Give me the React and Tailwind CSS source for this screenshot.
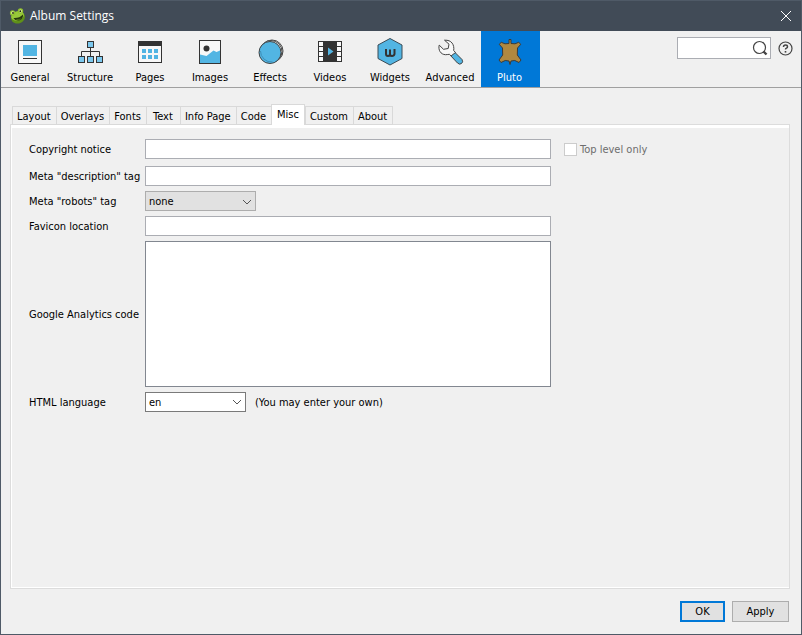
import { useState } from "react";

function FrogIcon() {
  return (
    <svg width="17" height="17" viewBox="0 0 17 17" aria-hidden="true">
      <ellipse cx="9" cy="9.500" rx="7" ry="6" transform="rotate(-18 9 9.500)" fill="#5f9018" />
      <ellipse cx="8.500" cy="7.800" rx="6.500" ry="4.600" transform="rotate(-18 8.500 7.800)" fill="#98c83a" />
      <circle cx="3.600" cy="5" r="2.700" fill="#8fc02c" />
      <circle cx="11.500" cy="3" r="2.700" fill="#8fc02c" />
      <circle cx="3.600" cy="4.800" r="1.500" fill="#dceaa0" />
      <circle cx="11.500" cy="2.900" r="1.500" fill="#dceaa0" />
      <circle cx="4" cy="5" r="0.900" fill="#1d2a08" />
      <circle cx="11.300" cy="3.200" r="0.900" fill="#1d2a08" />
      <path d="M4.500 10c3.500.4 7-.8 9.500-3.500.3 3.200-1.500 5.600-4.300 6-2.400.2-4.200-.6-5.200-2.500z" fill="#26380c" />
      <path d="M6.500 11.500c1.800.3 4-.3 5.500-1.500-.8 1.500-3.500 2.600-5.500 1.500z" fill="#7ba62c" />
    </svg>
  );
}

function GeneralIcon() {
  return (
    <svg width="30" height="30" viewBox="0 0 30 30" aria-hidden="true">
      <rect x="3.500" y="3.500" width="23" height="23" fill="#f8f8f8" stroke="#333" />
      <rect x="8" y="8" width="14" height="11" fill="#52b5e3" />
      <path d="M8 21.500h14" stroke="#333" />
    </svg>
  );
}

function StructureIcon() {
  return (
    <svg width="30" height="30" viewBox="0 0 30 30" fill="#7cc8ee" stroke="#333" aria-hidden="true">
      <path d="M15.500 10v10M6.500 20v-5.500h18V20" fill="none" />
      <rect x="12.500" y="4.500" width="6" height="6" />
      <rect x="3.500" y="19.500" width="6" height="6" />
      <rect x="12.500" y="19.500" width="6" height="6" />
      <rect x="21.500" y="19.500" width="6" height="6" />
    </svg>
  );
}

function PagesIcon() {
  return (
    <svg width="30" height="30" viewBox="0 0 30 30" aria-hidden="true">
      <rect x="3.500" y="4.500" width="23" height="21" fill="#f8f8f8" stroke="#333" />
      <path d="M3 4h24v5H3z" fill="#333" />
      <path
        d="M7 12h4v4H7zM13 12h4v4h-4zM19 12h4v4h-4zM7 18h4v4H7zM13 18h4v4h-4zM19 18h4v4h-4z"
        fill="#52b5e3"
      />
    </svg>
  );
}

function ImagesIcon() {
  return (
    <svg width="30" height="30" viewBox="0 0 30 30" aria-hidden="true">
      <rect x="4.500" y="3.500" width="21" height="23" fill="#f8f8f8" stroke="#333" />
      <path d="M5 17.500l6.500 1.500 7-5.500 3 1.500 3.500-1.500V26H5z" fill="#52b5e3" />
      <circle cx="11.500" cy="11.500" r="3" fill="#333" />
    </svg>
  );
}

function EffectsIcon() {
  return (
    <svg width="30" height="30" viewBox="0 0 30 30" stroke="#444" aria-hidden="true">
      <circle cx="17" cy="14" r="11" fill="#f8f8f8" />
      <circle cx="16" cy="14.500" r="11" fill="#f8f8f8" />
      <circle cx="15" cy="15.500" r="11" fill="#52b5e3" />
      <path d="M5.500 14a11 11 0 0 0 12 11" fill="none" stroke="#3d8fb8" />
    </svg>
  );
}

function VideosIcon() {
  return (
    <svg width="30" height="30" viewBox="0 0 30 30" aria-hidden="true">
      <path d="M3 4h24v21H3z" fill="#333" />
      <path
        d="M4 5h4v4H4zM4 10h4v4H4zM4 15h4v4H4zM4 20h4v4H4zM22 5h4v4h-4zM22 10h4v4h-4zM22 15h4v4h-4zM22 20h4v4h-4z"
        fill="#f8f8f8"
      />
      <path d="M13 10.500l5.500 4-5.500 4z" fill="#52b5e3" />
    </svg>
  );
}

function WidgetsIcon() {
  return (
    <svg width="30" height="30" viewBox="0 0 30 30" aria-hidden="true">
      <path d="M15 1.500l12 6.500v13.500l-12 6.500-12-6.500V8z" fill="#52b5e3" stroke="#3a4a55" />
      <path
        d="M11 12v5q0 2 2 2t2-2v-4.500M15 17q0 2 2 2t2.500-2v-5"
        fill="none"
        stroke="#333"
        strokeWidth="2"
      />
    </svg>
  );
}

function AdvancedIcon() {
  return (
    <svg width="30" height="30" viewBox="0 0 30 30" stroke="#444" strokeLinejoin="round" aria-hidden="true">
      <path d="M15.500 18.500l4-3.500 7.500 7.500q1.500 2.500-.5 4t-4-.5z" fill="#52b5e3" />
      <path
        d="M9.500 3.200l4.500 4-.8 4.300-4.700.8-4.300-4.200c-1.200 5 1.500 9.400 6.300 9.600 1.800 0 3-.4 4-.4l1.500 1.700 4.500-3.500-1.800-2c.8-5.600-2-10.800-9.200-10.300z"
        fill="#f8f8f8"
      />
    </svg>
  );
}

function PlutoIcon() {
  return (
    <svg width="30" height="30" viewBox="0 0 30 30" aria-hidden="true">
      <path
        d="M14 2.500h2v4l4 .3 3.700-1.500 2.100 2-3.300 3.700-.2 7 3.700 5-2 2.500-4.200-2-3.800.5-1 3.500-1-3.500-3.800-.5-4.200 2-2-2.500 3.700-5-.2-7L4.200 7.300l2.100-2L10 6.800l4-.3z"
        fill="#b08840"
        stroke="#3c3a38"
      />
    </svg>
  );
}

function Chevron() {
  return (
    <svg width="10" height="6" viewBox="0 0 10 6" fill="none" stroke="#555" aria-hidden="true">
      <path d="M1 1l4 4 4-4" />
    </svg>
  );
}

const sections = [
  { name: "General", icon: GeneralIcon },
  { name: "Structure", icon: StructureIcon },
  { name: "Pages", icon: PagesIcon },
  { name: "Images", icon: ImagesIcon },
  { name: "Effects", icon: EffectsIcon },
  { name: "Videos", icon: VideosIcon },
  { name: "Widgets", icon: WidgetsIcon },
  { name: "Advanced", icon: AdvancedIcon },
  { name: "Pluto", icon: PlutoIcon },
];

const tabs = ["Layout", "Overlays", "Fonts", "Text", "Info Page", "Code", "Misc", "Custom", "About"];

const labelClass = "pt-[2px]";
const fieldClass = "w-full h-5 px-1 bg-white border border-[#abadb3] outline-none";

export default function App() {
  const [section, setSection] = useState("Pluto");
  const [tab, setTab] = useState("Misc");
  const [robots, setRobots] = useState("none");
  const [language, setLanguage] = useState("en");

  return (
    <div className="min-h-screen flex flex-col bg-[#f0f0f0] border border-[#4f5a67] text-black text-[11px] leading-4 font-['DejaVu_Sans_Condensed','DejaVu_Sans',sans-serif]">
      <header className="flex items-center h-[30px] pl-2 pr-[5px] bg-[#414b57] text-white">
        <FrogIcon />
        <h1 className="ml-1 text-[12px] font-['Open_Sans',sans-serif]">Album Settings</h1>
        <button type="button" aria-label="Close" className="ml-auto p-1">
          <svg width="12" height="12" viewBox="0 0 12 12" stroke="#fff" aria-hidden="true">
            <path d="M1 1l10 10M11 1L1 11" />
          </svg>
        </button>
      </header>

      <div className="flex items-start border-b border-[#a0a0a0]">
        <nav className="flex">
          {sections.map(({ name, icon: Icon }) => (
            <button
              key={name}
              type="button"
              onClick={() => setSection(name)}
              className={`w-[60px] h-14 pt-[6px] pr-[2px] last:w-[59px] flex flex-col items-center gap-[3px] ${
                section === name ? "bg-[#0078d7] text-white" : ""
              }`}
            >
              <Icon />
              <span>{name}</span>
            </button>
          ))}
        </nav>
        <div className="ml-auto mt-[6px] mr-2 flex items-center gap-[7px]">
          <div className="flex items-center w-[94px] h-[22px] pr-[2px] bg-white border border-[#abadb3]">
            <input type="text" aria-label="Search" className="min-w-0 flex-1 h-full px-1 outline-none" />
            <svg width="16" height="16" viewBox="0 0 16 16" fill="none" stroke="#444" aria-hidden="true">
              <circle cx="7.500" cy="7.500" r="6" strokeWidth="1.200" />
              <path d="M11.500 11.500l3 3" strokeWidth="2.400" />
            </svg>
          </div>
          <button type="button" aria-label="Help">
            <svg width="15" height="15" viewBox="0 0 15 15" fill="none" stroke="#444" aria-hidden="true">
              <circle cx="7.500" cy="7.500" r="6.500" strokeWidth="1.200" />
              <path d="M5.500 6q0-2 2-2t2 1.700q0 1-1 1.500t-1 1.300" strokeWidth="1.500" />
              <path d="M7.500 10v1.600" strokeWidth="1.600" />
            </svg>
          </button>
        </div>
      </div>

      <main className="flex-1 flex flex-col px-[9px] pt-4">
        <div role="tablist" className="flex items-end pl-[2px] -mb-px z-10">
          {tabs.map((name) =>
            tab === name ? (
              <button
                key={name}
                type="button"
                role="tab"
                aria-selected="true"
                className="h-[21px] px-[5px] bg-white border border-b-0 border-[#d9d9d9]"
              >
                {name}
              </button>
            ) : (
              <button
                key={name}
                type="button"
                role="tab"
                aria-selected="false"
                onClick={() => setTab(name)}
                className="min-w-[34px] h-[19px] pt-[2px] pl-1 pr-[5px] border border-r-0 last:border-r border-[#d9d9d9]"
              >
                {name}
              </button>
            )
          )}
        </div>

        <div className="flex-1 flex flex-col mr-[2px] border border-[#dcdcdc]">
          <div className="flex-1 border-l border-b border-t-3 border-white pl-[17px] pt-[11px]">
            <form className="grid grid-cols-[116px_minmax(0,406px)_1fr] items-center gap-y-[5px]">
              <label htmlFor="copyright" className={labelClass}>Copyright notice</label>
              <input id="copyright" type="text" className={fieldClass} />
              <div className="ml-[13px] flex items-center gap-[3px] text-[#6d6d6d]">
                <input
                  id="top-level"
                  type="checkbox"
                  disabled
                  className="appearance-none size-[13px] bg-white border border-[#cccccc]"
                />
                <label htmlFor="top-level" className={labelClass}>Top level only</label>
              </div>

              <label htmlFor="description" className="pt-1">Meta "description" tag</label>
              <input id="description" type="text" className={`${fieldClass} mt-[2px]`} />
              <span />

              <label htmlFor="robots" className={labelClass}>Meta "robots" tag</label>
              <div className="relative w-[111px]">
                <select
                  id="robots"
                  value={robots}
                  onChange={(e) => setRobots(e.target.value)}
                  className="block appearance-none w-full h-5 pt-[2px] pl-[3px] bg-[#e1e1e1] border border-[#adadad] outline-none"
                >
                  <option>none</option>
                  <option>noindex</option>
                  <option>nofollow</option>
                  <option>noindex, nofollow</option>
                </select>
                <span className="absolute right-1 top-2 pointer-events-none">
                  <Chevron />
                </span>
              </div>
              <span />

              <label htmlFor="favicon" className={labelClass}>Favicon location</label>
              <input id="favicon" type="text" className={fieldClass} />
              <span />

              <label htmlFor="analytics" className={labelClass}>Google Analytics code</label>
              <textarea
                id="analytics"
                className="block w-full h-[146px] p-1 bg-white border border-[#828790] outline-none resize-none"
              />
              <span />

              <label htmlFor="language" className={labelClass}>HTML language</label>
              <div className="flex items-center gap-[9px]">
                <div className="flex items-center w-[101px] h-5 bg-white border border-[#7a7a7a]">
                  <input
                    id="language"
                    type="text"
                    list="languages"
                    value={language}
                    onChange={(e) => setLanguage(e.target.value)}
                    className="min-w-0 flex-1 pt-[2px] pl-[3px] outline-none"
                  />
                  <button type="button" aria-label="Show languages" className="px-[3px]">
                    <Chevron />
                  </button>
                  <datalist id="languages">
                    <option value="en" />
                    <option value="de" />
                    <option value="fr" />
                    <option value="sv" />
                  </datalist>
                </div>
                <span className={labelClass}>(You may enter your own)</span>
              </div>
            </form>
          </div>
        </div>
      </main>

      <footer className="flex justify-end gap-[7px] pt-3 pr-3 pb-3">
        <button type="button" className="w-[45px] h-[21px] bg-[#e1e1e1] border-2 border-[#0078d7]">
          OK
        </button>
        <button type="button" className="w-[57px] h-[21px] bg-[#e1e1e1] border border-[#adadad]">
          Apply
        </button>
      </footer>
    </div>
  );
}
